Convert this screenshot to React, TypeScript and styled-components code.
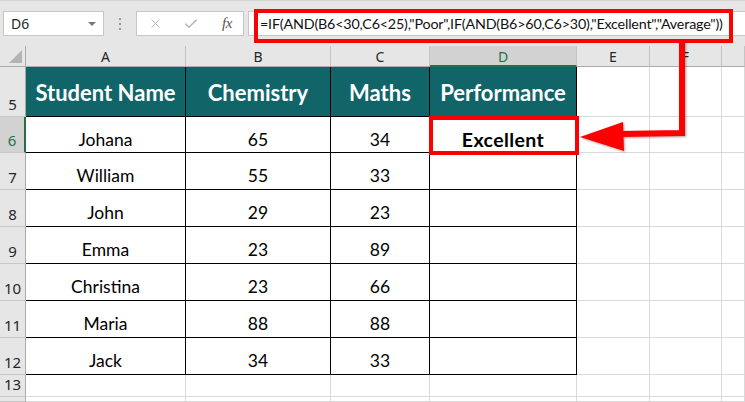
import React from 'react';
import styled, { createGlobalStyle, css } from 'styled-components';
import { X, Check } from 'lucide-react';

const Global = createGlobalStyle`
  html, body { margin: 0; padding: 0; background: #fff; }
  body { width: 745px; height: 402px; overflow: hidden; font-family: "Lato", "Liberation Sans", sans-serif; }
  * { box-sizing: border-box; }
`;

const Page = styled.div`
  position: relative;
  width: 745px;
  height: 402px;
  overflow: hidden;
  background: #fff;
  display: flex;
  flex-direction: column;
`;

const Toolbar = styled.div`
  height: 46px;
  flex: none;
  background: #e6e6e6;
  border-top: 1px solid #d6d6d6;
  display: flex;
  align-items: flex-start;
  padding: 10px 0 0 3px;
`;

const NameBox = styled.div`
  flex: none;
  width: 101px;
  height: 25px;
  background: #fff;
  border: 1px solid #c6c6c6;
  display: flex;
  align-items: center;
  justify-content: space-between;
  padding: 0 7px 0 7px;
  font-family: "Noto Sans", "Open Sans", sans-serif;
  font-size: 14px;
  color: #262626;
`;

const Caret = styled.span`
  width: 0;
  height: 0;
  border-left: 4px solid transparent;
  border-right: 4px solid transparent;
  border-top: 4px solid #777;
`;

const Separator = styled.div`
  flex: none;
  width: 32px;
  height: 25px;
  display: flex;
  flex-direction: column;
  align-items: center;
  justify-content: center;
  gap: 3px;
`;

const Dot = styled.span`
  width: 2px;
  height: 2px;
  background: #9a9a9a;
`;

const FxBox = styled.div`
  flex: none;
  width: 108px;
  height: 25px;
  background: #fff;
  border: 1px solid #c6c6c6;
  display: grid;
  grid-template-columns: 36px 36px 36px;
  align-items: center;
  justify-items: center;
`;

const Fx = styled.span`
  font-family: "Liberation Serif", serif;
  font-style: italic;
  font-size: 15px;
  color: #555;
  letter-spacing: -0.5px;
`;

const Formula = styled.div`
  position: relative;
  flex: 1;
  min-width: 0;
  height: 25px;
  margin-left: 4px;
  background: #fff;
  border: 1px solid #c6c6c6;
  border-right: none;
  display: flex;
  align-items: center;
  padding-left: 11px;
  font-family: "Lato", "Liberation Sans", sans-serif;
  font-size: 14.3px;
  letter-spacing: -0.18px;
  color: #111;
  white-space: nowrap;
`;

const RedFrame = styled.div<{ $inset: string }>`
  position: absolute;
  inset: ${p => p.$inset};
  border: 4px solid #ff0000;
  z-index: 3;
  pointer-events: none;
`;

const Sheet = styled.div`
  flex: 1;
  display: grid;
  grid-template-columns: 26px 160px 145px 99px 147px 73px 72px 1fr;
  grid-template-rows: 21px 50px 36px repeat(6, 37px) 22px 1fr;
`;

const Corner = styled.div`
  position: relative;
  background: #e6e6e6;
  border-right: 1px solid #ababab;
  border-bottom: 1px solid #ababab;
  &::after {
    content: '';
    position: absolute;
    right: 3px;
    bottom: 3px;
    width: 0;
    height: 0;
    border-left: 13px solid transparent;
    border-bottom: 13px solid #b4b4b4;
  }
`;

const ColHead = styled.div<{ $sel?: boolean }>`
  background: ${p => (p.$sel ? '#d2d2d2' : '#e6e6e6')};
  border-right: 1px solid #c4c4c4;
  border-bottom: ${p => (p.$sel ? '2px solid #217346' : '1px solid #ababab')};
  display: flex;
  align-items: center;
  justify-content: center;
  font-family: "Noto Sans", "Open Sans", sans-serif;
  font-size: 14px;
  color: ${p => (p.$sel ? '#217346' : '#262626')};
  padding-top: 1px;
`;

const RowHead = styled.div<{ $sel?: boolean }>`
  background: ${p => (p.$sel ? '#d2d2d2' : '#e6e6e6')};
  border-right: ${p => (p.$sel ? '2px solid #217346' : '1px solid #ababab')};
  border-bottom: 1px solid #c8c8c8;
  display: flex;
  align-items: flex-end;
  justify-content: center;
  padding-bottom: 3px;
  font-family: "Noto Sans", "Open Sans", sans-serif;
  font-size: 15px;
  line-height: 18px;
  color: ${p => (p.$sel ? '#217346' : '#262626')};
`;

type Kind = 'grid' | 'body' | 'head';

const Cell = styled.div<{ $kind: Kind; $bold?: boolean }>`
  position: relative;
  display: flex;
  justify-content: center;
  align-items: center;
  white-space: nowrap;
  border-right: 1px solid #d9d9d9;
  border-bottom: 1px solid #d9d9d9;
  font-family: "Lato", "Liberation Sans", sans-serif;
  font-size: 17.5px;
  color: #000;
  ${p =>
    p.$bold &&
    css`
      font-weight: 700;
      font-size: 19.5px;
      letter-spacing: 0.4px;
    `}
  ${p =>
    p.$kind === 'body' &&
    css`
      border-right-color: #000;
      border-bottom-color: #000;
      padding-top: 9px;
    `}
  ${p =>
    p.$kind === 'head' &&
    css`
      background: #116468;
      border-right-color: #000;
      border-bottom-color: #000;
      color: #fff;
      font-weight: 700;
      font-size: 22px;
      padding-top: 2px;
    `}
`;

const Arrow = styled.svg`
  position: absolute;
  left: 0;
  top: 0;
  z-index: 5;
  pointer-events: none;
  filter: drop-shadow(1.5px 1.5px 1px rgba(0, 0, 0, 0.35));
`;

const colLetters = ['A', 'B', 'C', 'D', 'E', 'F', ''];
const headers = ['Student Name', 'Chemistry', 'Maths', 'Performance'];
const data: [string, number, number][] = [
  ['Johana', 65, 34],
  ['William', 55, 33],
  ['John', 29, 23],
  ['Emma', 23, 89],
  ['Christina', 23, 66],
  ['Maria', 88, 88],
  ['Jack', 34, 33],
];

const EmptyTail = () => (
  <>
    <Cell $kind="grid" />
    <Cell $kind="grid" />
    <Cell $kind="grid" />
  </>
);

export default function App() {
  return (
    <Page>
      <Global />
      <Toolbar>
        <NameBox>
          <span>D6</span>
          <Caret />
        </NameBox>
        <Separator>
          <Dot />
          <Dot />
          <Dot />
        </Separator>
        <FxBox>
          <X size={15} color="#b4b4b4" strokeWidth={1.6} />
          <Check size={16} color="#b4b4b4" strokeWidth={2.2} />
          <Fx>fx</Fx>
        </FxBox>
        <Formula>
          =IF(AND(B6&lt;30,C6&lt;25),"Poor",IF(AND(B6&gt;60,C6&gt;30),"Excellent","Average"))
          <RedFrame $inset="-3px 12px -8px 5px" />
        </Formula>
      </Toolbar>
      <Sheet>
        <Corner />
        {colLetters.map((l, i) => (
          <ColHead key={i} $sel={l === 'D'}>
            {l}
          </ColHead>
        ))}
        <RowHead>5</RowHead>
        {headers.map(h => (
          <Cell key={h} $kind="head">
            {h}
          </Cell>
        ))}
        <EmptyTail />
        {data.map(([name, chem, maths], i) => (
          <React.Fragment key={name}>
            <RowHead $sel={i === 0}>{i + 6}</RowHead>
            <Cell $kind="body">{name}</Cell>
            <Cell $kind="body">{chem}</Cell>
            <Cell $kind="body">{maths}</Cell>
            <Cell $kind="body" $bold={i === 0}>
              {i === 0 ? 'Excellent' : ''}
              {i === 0 && <RedFrame $inset="-1px -3px -3px -1px" />}
            </Cell>
            <EmptyTail />
          </React.Fragment>
        ))}
        <RowHead>13</RowHead>
        {[0, 1, 2, 3, 4, 5, 6].map(k => (
          <Cell key={k} $kind="grid" />
        ))}
        <RowHead />
        {[0, 1, 2, 3, 4, 5, 6].map(k => (
          <Cell key={k} $kind="grid" />
        ))}
      </Sheet>
      <Arrow width="745" height="402" viewBox="0 0 745 402">
        <polyline points="682,41 682,133 620,134" fill="none" stroke="#ff0000" strokeWidth="6" strokeLinejoin="miter" />
        <polygon points="580,137 623,122 624,151" fill="#ff0000" />
      </Arrow>
    </Page>
  );
}
